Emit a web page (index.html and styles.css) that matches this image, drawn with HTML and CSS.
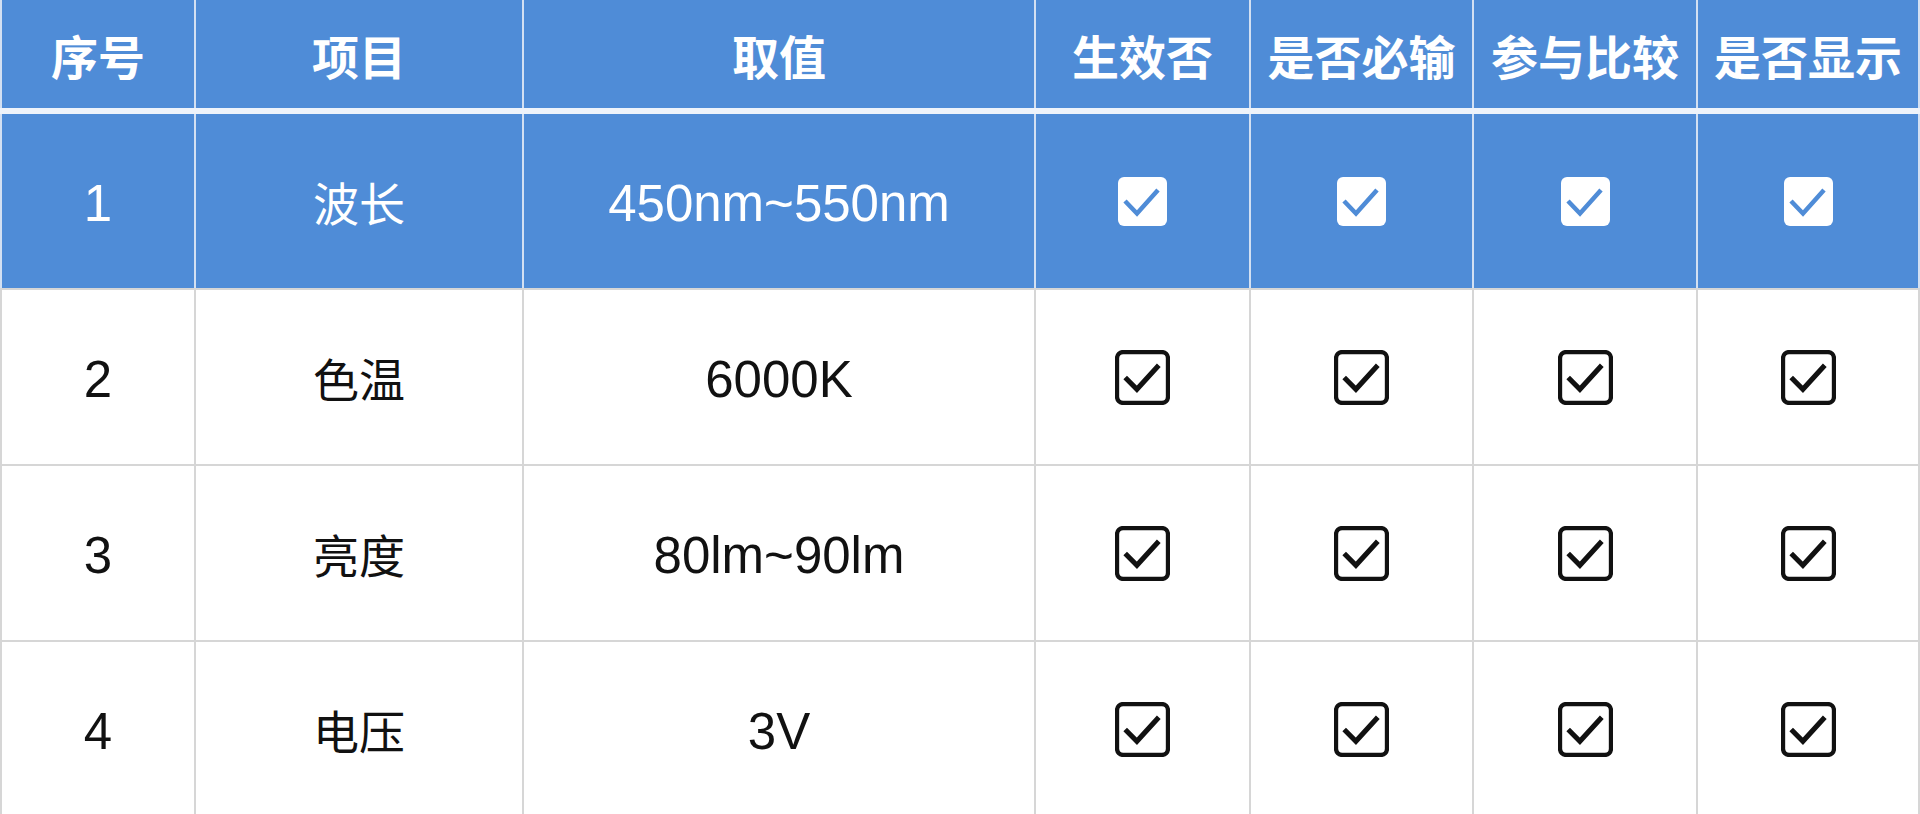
FILE: index.html
```html
<!DOCTYPE html>
<html lang="zh-CN">
<head>
<meta charset="utf-8">
<title>参数表</title>
<link rel="stylesheet" href="styles.css">
</head>
<body>
<div class="table">
  <div class="row head">
    <div class="cell">序号</div>
    <div class="cell">项目</div>
    <div class="cell">取值</div>
    <div class="cell">生效否</div>
    <div class="cell">是否必输</div>
    <div class="cell">参与比较</div>
    <div class="cell">是否显示</div>
  </div>
  <div class="row sel">
    <div class="cell num">1</div>
    <div class="cell">波长</div>
    <div class="cell num">450nm~550nm</div>
    <div class="cell"><svg width="49" height="49" viewBox="0 0 49 49"><rect width="49" height="49" rx="6" fill="#fff"/><polyline points="7,24 19,36.5 40,13" fill="none" stroke="#4f8cd7" stroke-width="4.5"/></svg></div>
    <div class="cell"><svg width="49" height="49" viewBox="0 0 49 49"><rect width="49" height="49" rx="6" fill="#fff"/><polyline points="7,24 19,36.5 40,13" fill="none" stroke="#4f8cd7" stroke-width="4.5"/></svg></div>
    <div class="cell"><svg width="49" height="49" viewBox="0 0 49 49"><rect width="49" height="49" rx="6" fill="#fff"/><polyline points="7,24 19,36.5 40,13" fill="none" stroke="#4f8cd7" stroke-width="4.5"/></svg></div>
    <div class="cell"><svg width="49" height="49" viewBox="0 0 49 49"><rect width="49" height="49" rx="6" fill="#fff"/><polyline points="7,24 19,36.5 40,13" fill="none" stroke="#4f8cd7" stroke-width="4.5"/></svg></div>
  </div>
  <div class="row">
    <div class="cell num">2</div>
    <div class="cell">色温</div>
    <div class="cell num">6000K</div>
    <div class="cell"><svg width="55" height="55" viewBox="0 0 54 54"><rect x="2" y="2" width="50" height="50" rx="6" fill="none" stroke="#111" stroke-width="4.2"/><polyline points="10,27 21.5,38.5 43,15" fill="none" stroke="#111" stroke-width="5"/></svg></div>
    <div class="cell"><svg width="55" height="55" viewBox="0 0 54 54"><rect x="2" y="2" width="50" height="50" rx="6" fill="none" stroke="#111" stroke-width="4.2"/><polyline points="10,27 21.5,38.5 43,15" fill="none" stroke="#111" stroke-width="5"/></svg></div>
    <div class="cell"><svg width="55" height="55" viewBox="0 0 54 54"><rect x="2" y="2" width="50" height="50" rx="6" fill="none" stroke="#111" stroke-width="4.2"/><polyline points="10,27 21.5,38.5 43,15" fill="none" stroke="#111" stroke-width="5"/></svg></div>
    <div class="cell"><svg width="55" height="55" viewBox="0 0 54 54"><rect x="2" y="2" width="50" height="50" rx="6" fill="none" stroke="#111" stroke-width="4.2"/><polyline points="10,27 21.5,38.5 43,15" fill="none" stroke="#111" stroke-width="5"/></svg></div>
  </div>
  <div class="row">
    <div class="cell num">3</div>
    <div class="cell">亮度</div>
    <div class="cell num">80lm~90lm</div>
    <div class="cell"><svg width="55" height="55" viewBox="0 0 54 54"><rect x="2" y="2" width="50" height="50" rx="6" fill="none" stroke="#111" stroke-width="4.2"/><polyline points="10,27 21.5,38.5 43,15" fill="none" stroke="#111" stroke-width="5"/></svg></div>
    <div class="cell"><svg width="55" height="55" viewBox="0 0 54 54"><rect x="2" y="2" width="50" height="50" rx="6" fill="none" stroke="#111" stroke-width="4.2"/><polyline points="10,27 21.5,38.5 43,15" fill="none" stroke="#111" stroke-width="5"/></svg></div>
    <div class="cell"><svg width="55" height="55" viewBox="0 0 54 54"><rect x="2" y="2" width="50" height="50" rx="6" fill="none" stroke="#111" stroke-width="4.2"/><polyline points="10,27 21.5,38.5 43,15" fill="none" stroke="#111" stroke-width="5"/></svg></div>
    <div class="cell"><svg width="55" height="55" viewBox="0 0 54 54"><rect x="2" y="2" width="50" height="50" rx="6" fill="none" stroke="#111" stroke-width="4.2"/><polyline points="10,27 21.5,38.5 43,15" fill="none" stroke="#111" stroke-width="5"/></svg></div>
  </div>
  <div class="row">
    <div class="cell num">4</div>
    <div class="cell">电压</div>
    <div class="cell num">3V</div>
    <div class="cell"><svg width="55" height="55" viewBox="0 0 54 54"><rect x="2" y="2" width="50" height="50" rx="6" fill="none" stroke="#111" stroke-width="4.2"/><polyline points="10,27 21.5,38.5 43,15" fill="none" stroke="#111" stroke-width="5"/></svg></div>
    <div class="cell"><svg width="55" height="55" viewBox="0 0 54 54"><rect x="2" y="2" width="50" height="50" rx="6" fill="none" stroke="#111" stroke-width="4.2"/><polyline points="10,27 21.5,38.5 43,15" fill="none" stroke="#111" stroke-width="5"/></svg></div>
    <div class="cell"><svg width="55" height="55" viewBox="0 0 54 54"><rect x="2" y="2" width="50" height="50" rx="6" fill="none" stroke="#111" stroke-width="4.2"/><polyline points="10,27 21.5,38.5 43,15" fill="none" stroke="#111" stroke-width="5"/></svg></div>
    <div class="cell"><svg width="55" height="55" viewBox="0 0 54 54"><rect x="2" y="2" width="50" height="50" rx="6" fill="none" stroke="#111" stroke-width="4.2"/><polyline points="10,27 21.5,38.5 43,15" fill="none" stroke="#111" stroke-width="5"/></svg></div>
  </div>
</div>
</body>
</html>
```

FILE: styles.css
```css
* { box-sizing: border-box; }
html, body {
  margin: 0;
  padding: 0;
  background: #ffffff;
  overflow: hidden;
}
body {
  font-family: "Noto Sans CJK SC", "Noto Sans", sans-serif;
  color: #111111;
}
.table {
  width: 1920px;
  display: flex;
  flex-direction: column;
}
.row {
  display: grid;
  grid-template-columns: 194px 328px 512px 215px 223px 224px 224px;
  height: 176px;
  border-bottom: 2px solid #d6d6d6;
}
.cell {
  display: flex;
  align-items: center;
  justify-content: center;
  border-left: 2px solid #d6d6d6;
  font-size: 46px;
  line-height: 1;
  white-space: nowrap;
}
.cell:last-child {
  border-right: 2px solid #d6d6d6;
}
.num {
  font-family: "Liberation Sans", Arial, sans-serif;
  font-size: 51px;
  padding-top: 4px;
}
.head {
  height: 114px;
  background: #4f8cd7;
  color: #ffffff;
  border-bottom: 6px solid #eef3fa;
}
.head .cell {
  font-weight: 700;
  font-size: 47px;
  border-color: #d3e0f2;
}
.sel {
  background: #4f8cd7;
  color: #ffffff;
}
.sel .cell {
  border-color: #d3e0f2;
}
svg { display: block; }
```
